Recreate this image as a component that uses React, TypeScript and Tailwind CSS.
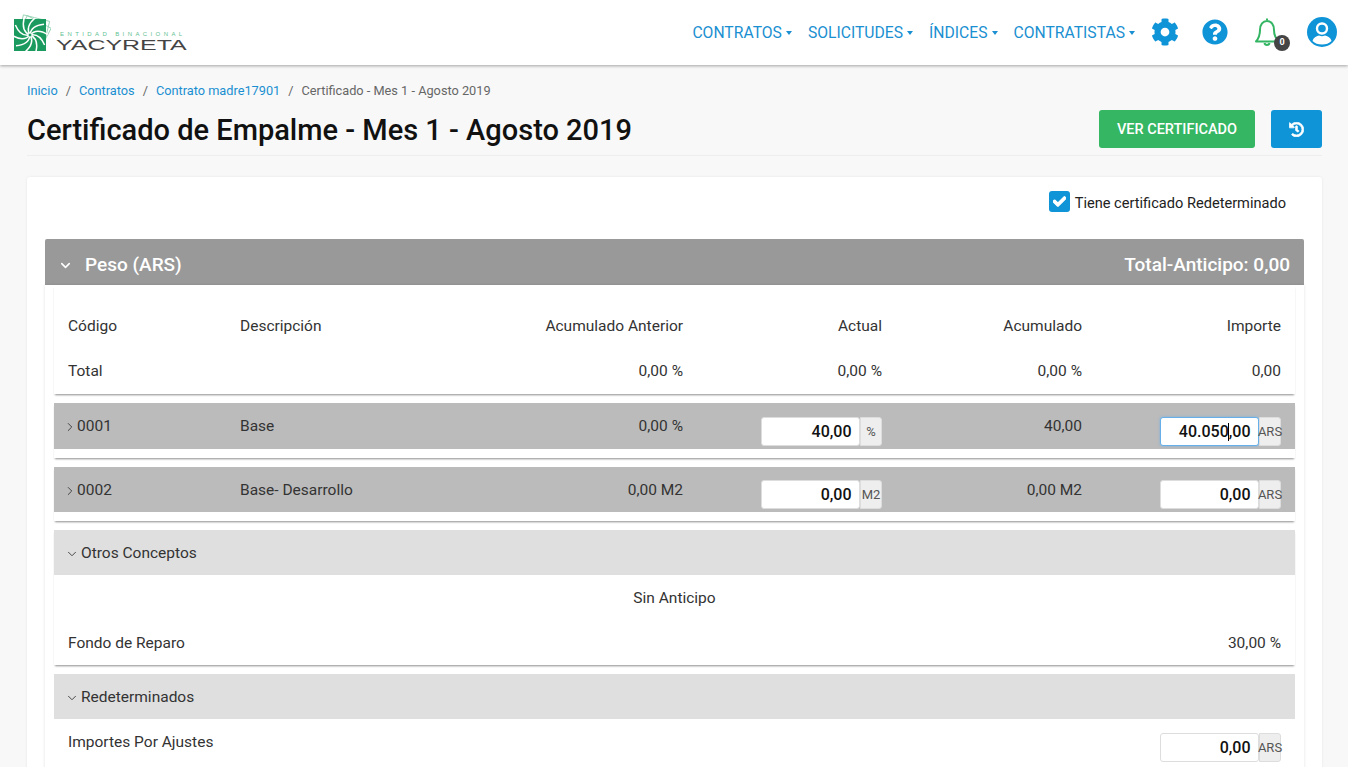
import { FaCog, FaQuestionCircle, FaHistory, FaCheck } from "react-icons/fa";
import { ChevronDown, ChevronRight } from "lucide-react";

const nav = ["CONTRATOS", "SOLICITUDES", "ÍNDICES", "CONTRATISTAS"];
const blades = [0, 36, 72, 108, 144, 180, 216, 252, 288, 324];
const rowGrid = "grid grid-cols-[172px_244px_199px_199px_200px_199px] px-[14px]";
const lineShadow = "shadow-[0_2px_2px_-1px_rgba(0,0,0,0.45)]";

function Logo() {
  return (
    <div className="flex items-end">
      <svg width="37" height="38" viewBox="0 0 37 38" className="mb-[1px]">
        <g fill="none" stroke="#8ccfae" strokeWidth="0.8">
          <rect x="5" y="4" width="27" height="27" transform="rotate(14 16 21)" />
          <rect x="5" y="6" width="27" height="27" transform="rotate(28 16 21)" />
        </g>
        <rect x="0" y="6" width="32" height="32" fill="#1a9a5e" />
        <g fill="none" stroke="#fff" strokeWidth="1.5">
          {blades.map((angle) => (
            <path key={angle} d="M16 22 C13 17 14 11 21 5" transform={`rotate(${angle} 16 22)`} />
          ))}
        </g>
        <circle cx="16" cy="22" r="2" fill="#1a9a5e" stroke="#fff" strokeWidth="1" />
      </svg>
      <div className="ml-[5px] flex flex-col">
        <span className="ml-[4px] text-[6px] leading-[7px] tracking-[3.4px] text-[#5fbf93] font-['Liberation_Sans',sans-serif]">
          ENTIDAD BINACIONAL
        </span>
        <span className="origin-left scale-x-[1.78] text-[14px] leading-[14px] text-[#444] font-['Liberation_Sans',sans-serif]">
          YACYRETA
        </span>
      </div>
    </div>
  );
}

function BellIcon() {
  return (
    <svg width="28" height="30" viewBox="0 0 28 30" fill="none" stroke="#33b563" strokeWidth="2" strokeLinejoin="round">
      <path d="M13 3 V1.5 M2 24.5 C5 21 6 18 6 13 C6 7.5 9 4 13 4 C17 4 20 7.5 20 13 C20 18 21 21 25 24.5 Z" />
      <path d="M10.5 26 C11 28.5 15 28.5 15.5 26" />
    </svg>
  );
}

function UserIcon() {
  return (
    <svg width="30" height="30" viewBox="0 0 30 30">
      <circle cx="15" cy="15" r="15" fill="#0f94d8" />
      <circle cx="15" cy="11.5" r="5" fill="#0f94d8" stroke="#fff" strokeWidth="2.4" />
      <path d="M5.5 24 C6.5 20 10 19 12 18.5 C14 19.5 16 19.5 18 18.5 C20 19 23.5 20 24.5 24 C22 26.5 19 27.5 15 27.5 C11 27.5 8 26.5 5.5 24 Z" fill="#fff" />
    </svg>
  );
}

function Header() {
  return (
    <header className="relative z-10 flex h-[65px] items-center justify-between bg-white pl-[14px] pr-[11px] shadow-[0_1px_3px_rgba(0,0,0,0.35)]">
      <Logo />
      <nav className="-mt-[1px] flex items-center">
        {nav.map((item) => (
          <a key={item} className="mr-4 mt-[2px] flex items-center text-[15.7px] text-[#1a8fd1]">
            {item}
            <span className="ml-[4px] mt-[1px] h-0 w-0 border-x-[3.5px] border-t-[4px] border-x-transparent border-t-[#1a8fd1]" />
          </a>
        ))}
        <FaCog className="text-[28px] text-[#0f94d8]" />
        <FaQuestionCircle className="ml-[23px] text-[26px] text-[#0f94d8]" />
        <div className="relative ml-[26px] mr-[25px]">
          <BellIcon />
          <span className="absolute -right-[8px] bottom-[-4px] flex h-4 w-4 items-center justify-center rounded-full bg-[#444] text-[9px] font-bold text-white">
            0
          </span>
        </div>
        <UserIcon />
      </nav>
    </header>
  );
}

function Field({ value, unit, focused }: { value: string; unit: string; focused?: boolean }) {
  return (
    <div className="flex justify-end">
      <div
        className={`flex h-[29px] w-[99px] items-center justify-end rounded-[3px] border bg-white pr-[7.5px] text-[16px] font-medium text-[#111] ${
          focused ? "border-[#66afe9] shadow-[0_0_3px_rgba(102,175,233,0.7)]" : "border-[#ddd]"
        }`}
      >
        {focused ? (
          <>
            40.050<span className="-mx-[0.5px] h-[18px] w-px bg-black" />,00
          </>
        ) : (
          value
        )}
      </div>
      <span className="flex h-[29px] w-[22px] items-center justify-center rounded-r-[3px] border border-[#ddd] bg-[#eee] text-[13px] text-[#555]">
        {unit}
      </span>
    </div>
  );
}

function ItemRow({
  code,
  name,
  prev,
  actual,
  unit,
  acum,
  importe,
  focused,
  height,
  fieldTop,
}: {
  code: string;
  name: string;
  prev: string;
  actual: string;
  unit: string;
  acum: string;
  importe: string;
  focused?: boolean;
  height: string;
  fieldTop: string;
}) {
  return (
    <div className={`mb-[9px] pb-[9px] ${lineShadow}`}>
      <div className={`${rowGrid} ${height} bg-[#bbb]`}>
        <div className="flex h-[46px] items-center pt-[2px]">
          <ChevronRight size={14} strokeWidth={1.5} className="-ml-[5px]" />
          {code}
        </div>
        <div className="flex h-[46px] items-center pt-[2px]">{name}</div>
        <div className="flex h-[46px] items-center justify-end pt-[2px]">{prev}</div>
        <div className={fieldTop}>
          <Field value={actual} unit={unit} />
        </div>
        <div className="flex h-[46px] items-center justify-end pt-[2px]">{acum}</div>
        <div className={fieldTop}>
          <Field value={importe} unit="ARS" focused={focused} />
        </div>
      </div>
    </div>
  );
}

function SectionBar({ title }: { title: string }) {
  return (
    <div className="flex h-[45px] items-center bg-[#dfdfdf] px-[14px] pt-[2px]">
      <ChevronDown size={14} strokeWidth={1.5} className="-ml-[3px] mr-[2px]" />
      {title}
    </div>
  );
}

export default function App() {
  return (
    <div className="h-[767px] overflow-hidden bg-[#f8f8f8] font-['Roboto',sans-serif] text-[15.5px] text-[#333]">
      <Header />
      <main className="pl-[27px] pr-[26px]">
        <div className="flex h-[91px] items-end justify-between border-b border-[#eee] pb-[7px]">
          <div>
            <div className="mb-[13px] flex text-[12.75px] leading-[16px] text-[#666]">
              <a className="text-[#1a8fd1]">Inicio</a>
              <span className="mx-[8px]">/</span>
              <a className="text-[#1a8fd1]">Contratos</a>
              <span className="mx-[8px]">/</span>
              <a className="text-[#1a8fd1]">Contrato madre17901</a>
              <span className="mx-[8px]">/</span>
              <span>Certificado - Mes 1 - Agosto 2019</span>
            </div>
            <h1 className="text-[29px] font-medium leading-[36px] text-[#111]">
              Certificado de Empalme - Mes 1 - Agosto 2019
            </h1>
          </div>
          <div className="flex">
            <button className="h-[38px] w-[156px] rounded-[3px] bg-[#34b662] pt-[2px] text-[14.5px] font-medium text-white">
              VER CERTIFICADO
            </button>
            <button className="ml-4 flex h-[38px] w-[51px] items-center justify-center rounded-[3px] bg-[#0f94d8] text-[15px] text-white">
              <FaHistory className="stroke-[24px]" />
            </button>
          </div>
        </div>

        <section className="mt-[21px] rounded-[3px] bg-white px-[18px] pb-[40px] shadow-[0_0_3px_rgba(0,0,0,0.08)]">
          <div className="flex h-[62px] items-start justify-end pr-[18px] pt-[14px]">
            <span className="mr-[5px] flex h-[21px] w-[21px] items-center justify-center rounded-[3px] bg-[#0f94d8] text-[13px] text-white">
              <FaCheck className="stroke-[40px]" />
            </span>
            <span className="text-[14.6px] leading-[24px] text-[#222]">Tiene certificado Redeterminado</span>
          </div>

          <div className="flex h-[46px] items-center justify-between rounded-t-[2px] bg-[#999] px-[14px] pt-[6px] text-[19px] font-medium text-white">
            <div className="flex items-center">
              <ChevronDown size={15} strokeWidth={2.5} className="-ml-[1px] mr-[12px]" />
              Peso (ARS)
            </div>
            <span>Total-Anticipo: 0,00</span>
          </div>

          <div className="px-[9px] pb-[40px] shadow-[0_0_3px_rgba(0,0,0,0.12)]">
            <div className={`mb-[9px] ${lineShadow}`}>
              <div className={`${rowGrid} h-[64px] pt-[30px]`}>
                <span>Código</span>
                <span>Descripción</span>
                <span className="text-right">Acumulado Anterior</span>
                <span className="text-right">Actual</span>
                <span className="text-right">Acumulado</span>
                <span className="text-right">Importe</span>
              </div>
              <div className={`${rowGrid} h-[45px] pt-[11px]`}>
                <span>Total</span>
                <span />
                <span className="text-right">0,00 %</span>
                <span className="text-right">0,00 %</span>
                <span className="text-right">0,00 %</span>
                <span className="text-right">0,00</span>
              </div>
            </div>

            <ItemRow code="0001" name="Base" prev="0,00 %" actual="40,00" unit="%" acum="40,00" importe="40.050,00" focused height="h-[46px]" fieldTop="pt-[14px]" />
            <ItemRow code="0002" name="Base- Desarrollo" prev="0,00 M2" actual="0,00" unit="M2" acum="0,00 M2" importe="0,00" height="h-[45px]" fieldTop="pt-[13px]" />

            <div className={`mb-[9px] ${lineShadow}`}>
              <SectionBar title="Otros Conceptos" />
              <div className="flex h-[45px] items-center justify-center pt-[2px]">Sin Anticipo</div>
              <div className="flex h-[45px] items-center justify-between px-[14px] pt-[2px]">
                <span>Fondo de Reparo</span>
                <span>30,00 %</span>
              </div>
            </div>

            <SectionBar title="Redeterminados" />
            <div className="flex items-start justify-between px-[14px] pt-[14px]">
              <span className="leading-[18px]">Importes Por Ajustes</span>
              <Field value="0,00" unit="ARS" />
            </div>
          </div>
        </section>
      </main>
    </div>
  );
}
